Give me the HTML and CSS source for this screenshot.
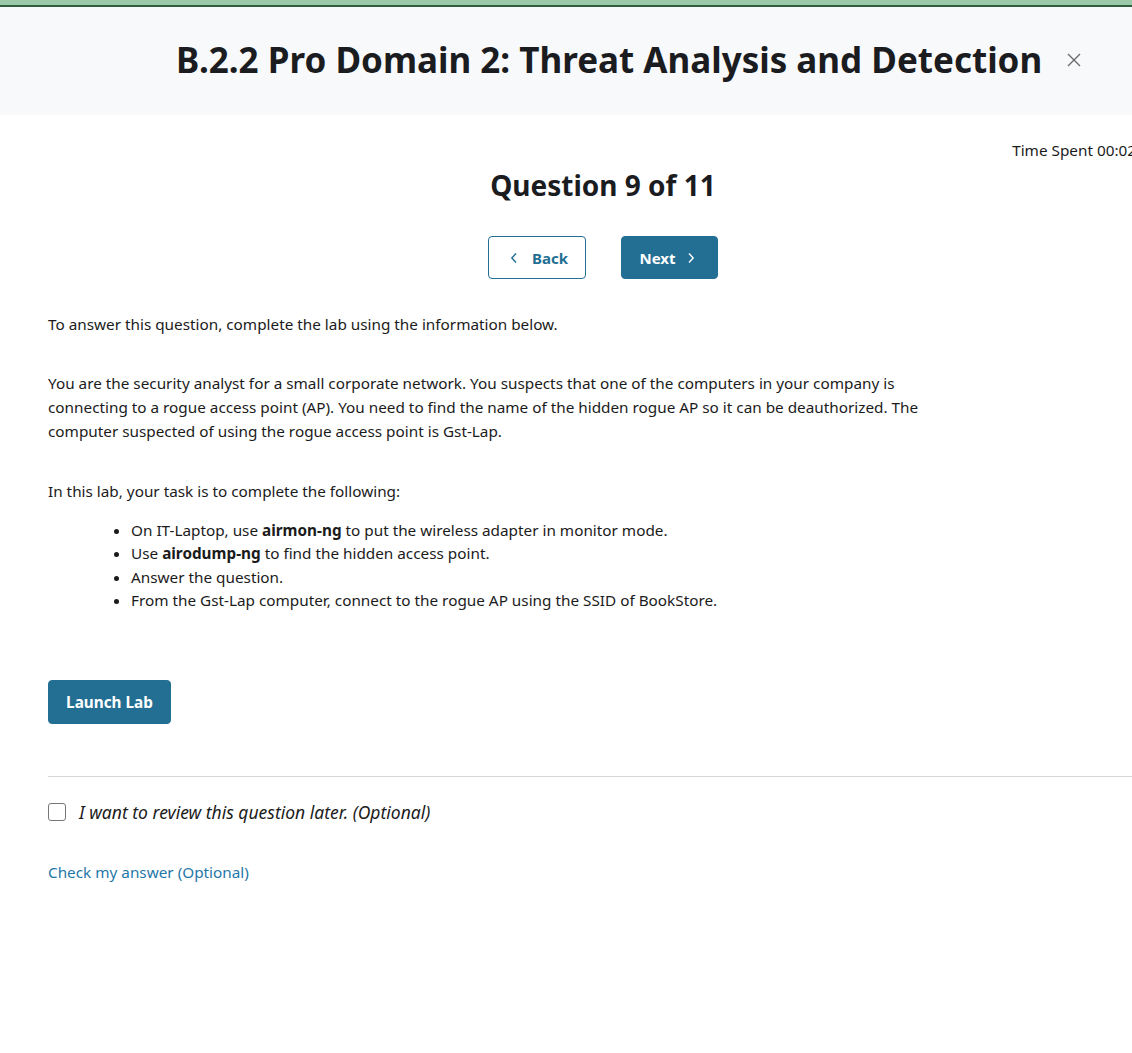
FILE: index.html
```html
<!DOCTYPE html>
<html lang="en">
<head>
<meta charset="utf-8">
<title>B.2.2 Pro Domain 2: Threat Analysis and Detection</title>
<link rel="stylesheet" href="styles.css">
</head>
<body>
<div class="topbar"></div>
<header class="header">
  <h1 class="header-title">B.2.2 Pro Domain 2: Threat Analysis and Detection</h1>
  <button class="close-btn" aria-label="Close">
    <svg width="16" height="16" viewBox="0 0 16 16"><path d="M2 2 L14 14 M14 2 L2 14" stroke="#6b6b6b" stroke-width="1.4" fill="none"/></svg>
  </button>
</header>
<main class="main">
  <div class="timer">Time Spent 00:02</div>
  <h2 class="question-title">Question 9 of 11</h2>
  <div class="nav">
    <button class="btn btn-outline">
      <svg width="8" height="12" viewBox="0 0 8 12"><path d="M6 1.5 L1.8 6 L6 10.5" stroke="#236f94" stroke-width="1.4" fill="none"/></svg>
      <span>Back</span>
    </button>
    <button class="btn btn-solid btn-next">
      <span>Next</span>
      <svg width="8" height="12" viewBox="0 0 8 12"><path d="M2 1.5 L6.2 6 L2 10.5" stroke="#ffffff" stroke-width="1.4" fill="none"/></svg>
    </button>
  </div>
  <div class="content">
    <p class="intro">To answer this question, complete the lab using the information below.</p>
    <p class="scenario">You are the security analyst for a small corporate network. You suspects that one of the computers in your company is connecting to a rogue access point (AP). You need to find the name of the hidden rogue AP so it can be deauthorized. The computer suspected of using the rogue access point is Gst-Lap.</p>
    <p class="task">In this lab, your task is to complete the following:</p>
    <ul class="task-list">
      <li>On IT-Laptop, use <strong>airmon-ng</strong> to put the wireless adapter in monitor mode.</li>
      <li>Use <strong>airodump-ng</strong> to find the hidden access point.</li>
      <li>Answer the question.</li>
      <li>From the Gst-Lap computer, connect to the rogue AP using the SSID of BookStore.</li>
    </ul>
    <button class="btn btn-solid btn-launch">Launch Lab</button>
  </div>
  <hr class="divider">
  <label class="review">
    <span class="checkbox"></span>
    <span class="review-text">I want to review this question later. (Optional)</span>
  </label>
  <a class="check-link" href="#">Check my answer (Optional)</a>
</main>
</body>
</html>
```
FILE: styles.css
```css
html, body {
  margin: 0;
  padding: 0;
  overflow: hidden;
  background: #ffffff;
}
body {
  font-family: "Noto Sans", "Open Sans", sans-serif;
  color: #1b1b1b;
  width: 1160px;
}
.topbar {
  height: 5px;
  background: #99c9a8;
  border-bottom: 2px solid #2f5e3e;
}
.header {
  background: #f8f9fa;
  height: 105px;
  padding-bottom: 3px;
  display: flex;
  align-items: center;
  padding-left: 176px;
  gap: 20px;
}
.header-title {
  margin: 0;
  font-size: 35px;
  font-weight: 700;
  color: #1b1c1f;
}
.close-btn {
  border: 0;
  background: transparent;
  padding: 4px;
  display: flex;
  cursor: pointer;
}
.main {
  padding: 25px 0 0 48px;
  width: 1110px;
}
.timer {
  text-align: right;
  font-size: 15.3px;
  line-height: 20px;
  white-space: nowrap;
  margin-right: 22px;
}
.question-title {
  text-align: center;
  margin: 5px 0 0 0;
  font-size: 28px;
  font-weight: 700;
  line-height: 40px;
  color: #1b1c1f;
}
.nav {
  display: flex;
  justify-content: center;
  gap: 35px;
  margin-top: 31px;
}
.btn {
  font-family: inherit;
  font-size: 15px;
  font-weight: 700;
  border-radius: 4px;
  height: 43px;
  display: inline-flex;
  align-items: center;
  justify-content: center;
  gap: 14px;
  cursor: pointer;
  padding: 0;
}
.btn-next {
  gap: 11px;
  padding-right: 5px;
}
.btn-outline {
  width: 98px;
  background: #ffffff;
  border: 1px solid #236f94;
  color: #236f94;
  padding-left: 4px;
}
.btn-solid {
  width: 97px;
  background: #236f94;
  border: 1px solid #236f94;
  color: #ffffff;
}
.content {
  width: 880px;
  font-size: 15.3px;
  line-height: 24px;
}
.content p {
  margin: 0;
}
.intro {
  margin-top: 33px !important;
}
.scenario {
  margin-top: 35px !important;
}
.task {
  margin-top: 36px !important;
}
.task-list {
  margin: 16px 0 0 0;
  padding-left: 83px;
  line-height: 23.3px;
}
.task-list strong {
  font-weight: 700;
}
.btn-launch {
  width: 123px;
  height: 44px;
  margin-top: 68px;
  display: flex;
  font-size: 15.3px;
}
.divider {
  margin: 52px 0 0 0;
  border: 0;
  border-top: 1px solid #d6d6d6;
  width: 1100px;
}
.review {
  display: flex;
  align-items: center;
  gap: 13px;
  margin-top: 23px;
}
.checkbox {
  width: 16px;
  height: 16px;
  border: 1px solid #767676;
  border-radius: 3px;
  background: #fff;
}
.review-text {
  font-style: italic;
  font-size: 17.5px;
  line-height: 24px;
}
.check-link {
  display: block;
  margin-top: 38px;
  font-size: 15.3px;
  color: #1f77a8;
  text-decoration: none;
}
```
